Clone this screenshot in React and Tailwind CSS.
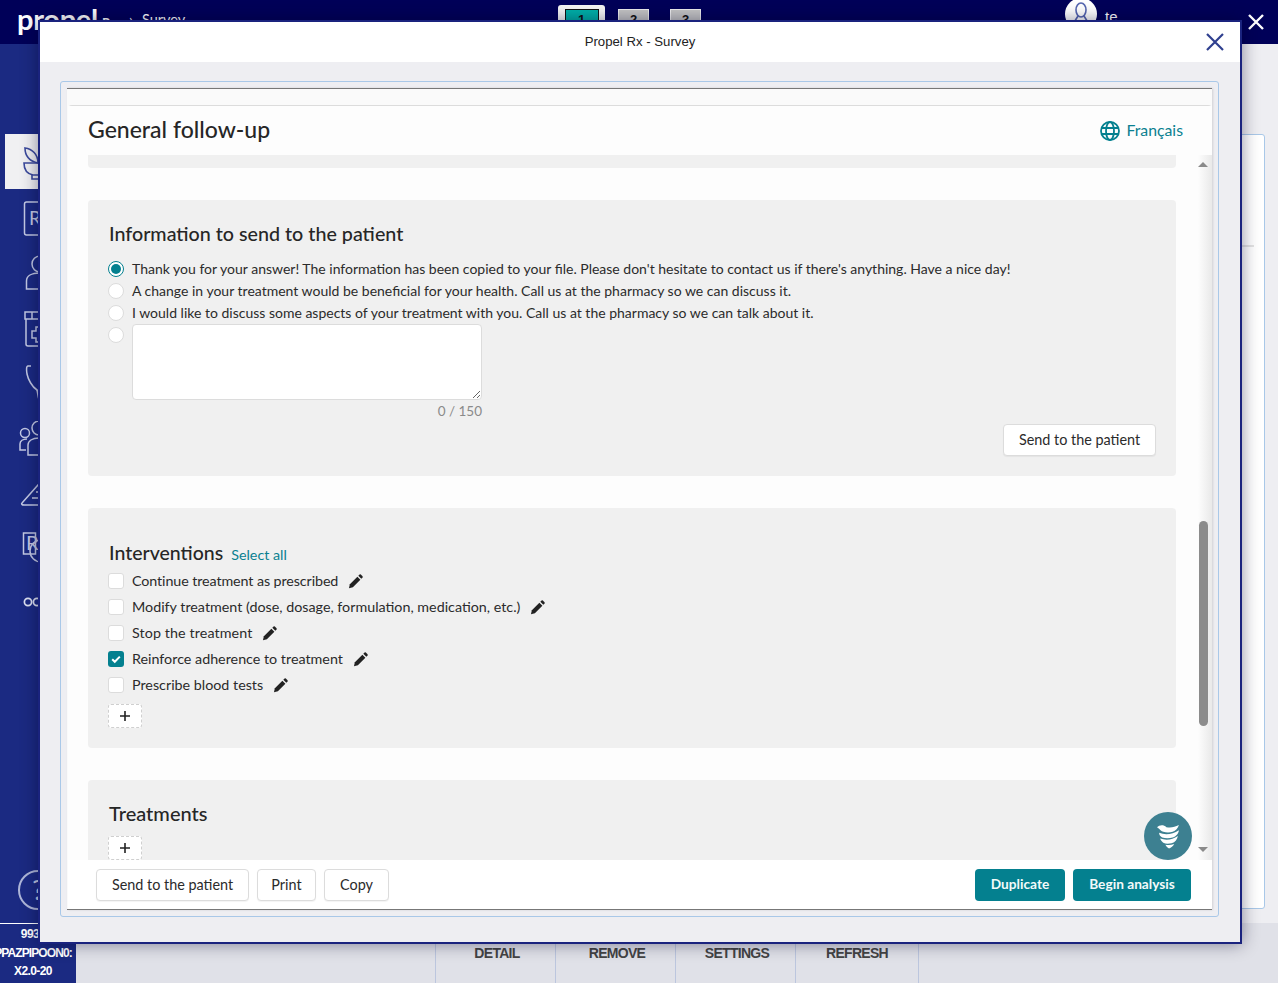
import React from "react";

const Pencil = () => (
  <svg className="shrink-0" width="15" height="15" viewBox="0 0 16 16" fill="#222">
    <path d="M1 15.2L2 10.8L10 2.8L13.2 6L5.2 14Z" />
    <path d="M11 1.8L12.3.5Q13 0 13.7.5L15.5 2.3Q16 3 15.5 3.7L14.2 5Z" />
  </svg>
);

const Check = ({ label, checked, className = "" }) => (
  <div className="flex items-center h-[26px]">
    {checked ? (
      <span className="w-[16px] h-[16px] rounded-[3px] bg-[#04808f] flex items-center justify-center shrink-0">
        <svg width="10" height="10" viewBox="0 0 10 10" fill="none" stroke="#fff" strokeWidth="2"><path d="M1.2 5.2l2.6 2.6 5-5.2" /></svg>
      </span>
    ) : (
      <span className="w-[16px] h-[16px] rounded-[3px] bg-white border border-[#dcdcdc] shrink-0" />
    )}
    <span className={"ml-[8px] mr-[10px] text-[14.3px] text-[#2b2b2b] " + className}>{label}</span>
    <Pencil />
  </div>
);

const Radio = ({ checked }) =>
  checked ? (
    <span className="w-[16px] h-[16px] rounded-full bg-white border border-[#04808f] flex items-center justify-center shrink-0">
      <span className="w-[10px] h-[10px] rounded-full bg-[#04808f]" />
    </span>
  ) : (
    <span className="w-[16px] h-[16px] rounded-full bg-white border border-[#dcdcdc] shrink-0" />
  );

const RadioRow = ({ label, checked }) => (
  <div className="flex items-center h-[22px]">
    <Radio checked={checked} />
    <span className="ml-[8px] pb-[2px] text-[14px] text-[#2b2b2b] whitespace-nowrap">{label}</span>
  </div>
);

const Btn = ({ children, className = "" }) => (
  <button className={"h-[32px] px-0 bg-white border border-[#dcdcdc] rounded-[4px] text-[14.4px] text-[#2b2b2b] shadow-[0_1px_1px_rgba(0,0,0,0.05)] " + className}>
    {children}
  </button>
);

const Teal = ({ children, className = "" }) => (
  <button className={"h-[32px] px-0 bg-[#04808f] rounded-[4px] text-[13.7px] font-bold text-[#f2fafa] " + className}>{children}</button>
);

const Plus = () => (
  <div className="w-[34px] h-[24px] bg-white border border-dashed border-[#cfcfcf] rounded-[3px] flex items-center justify-center">
    <svg width="12" height="12" viewBox="0 0 12 12" stroke="#222" strokeWidth="1.6"><path d="M6 1v10M1 6h10" /></svg>
  </div>
);

const S = { fill: "none", stroke: "#c3c9e4", strokeWidth: 1.5 };

function Sidebar() {
  return (
    <div className="w-[76px] bg-[#1b2a82] shrink-0 flex flex-col pt-[90px]">
      <div className="ml-[5px] h-[55px] w-[71px] bg-[#f0f0f2] flex items-center pl-[16px]">
        <svg width="40" height="40" viewBox="0 0 40 40" fill="none" stroke="#3b4a9c" strokeWidth="1.6">
          <path d="M3 21h30c0 7-5 11-9 12H12C7 32 3 28 3 21z" />
          <path d="M11 33v4h14v-4" />
          <path d="M17 21C8 19 4 13 4 6c7 1 13 6 13 15zM18 21c0-8 5-14 13-16 1 8-4 14-13 16z" />
        </svg>
      </div>
      <svg className="ml-[20px] mt-[12px] shrink-0" width="40" height="35" viewBox="0 0 40 35" {...S}>
        <rect x="4.5" y="1" width="32" height="33" rx="2" />
        <text x="9" y="24" fontSize="19" fill="#c3c9e4" stroke="none" fontFamily="Lato, sans-serif">Rx</text>
      </svg>
      <svg className="ml-[20px] mt-[19px] shrink-0" width="40" height="36" viewBox="0 0 40 36" {...S}>
        <circle cx="20" cy="9" r="8" />
        <path d="M6.5 34V26c0-5 5-8 13-8s14 3 14 8v8z" />
      </svg>
      <svg className="ml-[20px] mt-[20px] shrink-0" width="40" height="36" viewBox="0 0 40 36" {...S}>
        <path d="M5 1h30v7H5zM6 8v25a2 2 0 002 2h24a2 2 0 002-2V8" />
        <path d="M16 16h7v4h4v7h-4v4h-7v-4h-4v-7h4z" />
        <path d="M12 1v7M19 1v7M26 1v7" />
      </svg>
      <svg className="ml-[20px] mt-[18px] shrink-0" width="40" height="38" viewBox="0 0 40 38" {...S}>
        <path d="M11 1H8C6 1 6.5 6 7 9c1 5 5 13 10 16 6 3 16 2 18-4" />
        <path d="M17 25c1 4 1 9 3 12" />
      </svg>
      <svg className="ml-[19px] mt-[18px] shrink-0" width="42" height="36" viewBox="0 0 42 36" {...S}>
        <circle cx="6" cy="12" r="4.5" />
        <path d="M7 29H1v-6c0-3 3-5 7-5" />
        <circle cx="20" cy="7" r="7" />
        <path d="M9 34V24c0-4 4-7 11-7s13 3 13 7v10z" />
      </svg>
      <svg className="ml-[20px] mt-[25px] shrink-0" width="40" height="26" viewBox="0 0 40 26" {...S}>
        <path d="M2 21L18 3c8 4 14 10 18 20H4c-2 0-3-1-2-2z" />
        <path d="M12 16h12M16 10h8" />
      </svg>
      <svg className="ml-[20px] mt-[24px] shrink-0" width="40" height="32" viewBox="0 0 40 32" {...S}>
        <path d="M3.5 1h12v21h-12zM3.5 1" />
        <text x="6" y="18" fontSize="20" fill="#c3c9e4" stroke="none" fontFamily="Lato, sans-serif">R</text>
        <circle cx="21" cy="19" r="11" />
      </svg>
      <svg className="ml-[20px] mt-[31px] shrink-0" width="40" height="14" viewBox="0 0 40 14" fill="none" stroke="#dfe3f2" strokeWidth="1.7">
        <circle cx="8" cy="7" r="3.6" />
        <circle cx="17" cy="7" r="3.6" />
        <circle cx="26" cy="7" r="3.6" />
      </svg>
      <div className="mt-auto ml-[18px] mb-[13px] w-[40px] h-[40px] rounded-full border-2 border-[#aeb6d8] flex items-center justify-center text-[#c3c9e4] text-[26px] font-['Lato',sans-serif]">?</div>
    </div>
  );
}

function Survey() {
  return (
    <div className="relative h-[705px] overflow-hidden bg-[#fdfdfd]">
      <div className="pl-[20px] w-[1108px]">
        <div className="h-[13px] bg-[#f0f0f0] rounded-b-[4px]" />

        <section className="mt-[32px] h-[276px] bg-[#f0f0f0] rounded-[4px] px-[20px] pt-[20px]">
          <h2 className="ml-[1px] text-[19.7px] leading-[28px] font-medium text-[#262626]">Information to send to the patient</h2>
          <div className="mt-[10px]">
            <RadioRow checked label="Thank you for your answer! The information has been copied to your file. Please don't hesitate to contact us if there's anything. Have a nice day!" />
            <RadioRow label="A change in your treatment would be beneficial for your health. Call us at the pharmacy so we can discuss it." />
            <RadioRow label="I would like to discuss some aspects of your treatment with you. Call us at the pharmacy so we can talk about it." />
            <div className="flex items-start h-[76px]">
              <span className="mt-[3px] flex"><Radio /></span>
              <textarea aria-label="Custom message" className="ml-[8px] w-[350px] h-[76px] bg-white border border-[#dcdcdc] rounded-[4px]" />
            </div>
          </div>
          <div className="w-[374px] text-right text-[13.5px] leading-[22px] text-[#8a8a8a]">0 / 150</div>
          <div className="mt-[2px] flex justify-end">
            <Btn className="w-[153px]">Send to the patient</Btn>
          </div>
        </section>

        <section className="mt-[32px] h-[240px] bg-[#f0f0f0] rounded-[4px] px-[20px] pt-[31px]">
          <div className="flex items-baseline h-[28px]">
            <h2 className="ml-[1px] text-[19.5px] leading-[28px] font-medium text-[#262626]">Interventions</h2>
            <a className="ml-[8px] text-[14.3px] text-[#0a8090]">Select all</a>
          </div>
          <div className="mt-[1px]">
            <Check label="Continue treatment as prescribed" className="tracking-[-0.1px]" />
            <Check label="Modify treatment (dose, dosage, formulation, medication, etc.)" />
            <Check label="Stop the treatment" className="tracking-[0.1px]" />
            <Check checked label="Reinforce adherence to treatment" />
            <Check label="Prescribe blood tests" />
          </div>
          <div className="mt-[6px]"><Plus /></div>
        </section>

        <section className="mt-[32px] h-[120px] bg-[#f0f0f0] rounded-[4px] px-[20px] pt-[19px]">
          <h2 className="ml-[1px] text-[20px] leading-[28px] font-medium text-[#262626]">Treatments</h2>
          <div className="mt-[9px]"><Plus /></div>
        </section>
      </div>

      {/* scrollbar overlay */}
      <div className="absolute right-0 top-0 bottom-0 w-[14px] bg-gradient-to-r from-transparent to-[#e9e9e9]" />
      <span className="absolute left-[1130px] top-[7px] w-0 h-0 border-x-[5px] border-x-transparent border-b-[5px] border-b-[#8a8a8a]" />
      <span className="absolute left-[1131px] top-[366px] w-[9px] h-[205px] rounded-full bg-[#8c8c8c]" />
      <span className="absolute left-[1130px] top-[692px] w-0 h-0 border-x-[5px] border-x-transparent border-t-[5px] border-t-[#8a8a8a]" />
    </div>
  );
}

export default function App() {
  return (
    <div className="relative w-[1278px] h-[983px] overflow-hidden bg-[#eeeef2] font-['Lato','Liberation_Sans',sans-serif] flex flex-col">
      {/* top bar */}
      <header className="h-[44px] bg-[#000058] flex items-start shrink-0 text-white">
        <div className="ml-[17px] w-[112px] flex items-start shrink-0">
          <span className="mt-[-3px] text-[29px] leading-[44px] font-bold tracking-[-0.3px]">propel</span>
          <span className="ml-[4px] mt-[11px] text-[13px] leading-[24px] font-bold">Rx</span>
        </div>
        <span className="w-[13px] mt-[9px] text-[14.5px] shrink-0">›</span>
        <span className="w-[416px] mt-[9px] text-[14.5px] shrink-0">Survey</span>
        <div className="mt-[5px] w-[47px] h-[30px] bg-[#f4f4f4] rounded-t-[3px] flex justify-center pt-[4px] shrink-0">
          <span className="w-[34px] h-[30px] bg-[#00b0a8] border border-[#111] text-[#111] text-[13px] font-bold text-center font-['Liberation_Sans',sans-serif]">1</span>
        </div>
        <span className="ml-[13px] mt-[9px] w-[31px] h-[30px] bg-[#c4c4c4] border border-[#eee] text-[#111] text-[13px] font-bold text-center font-['Liberation_Sans',sans-serif]">2</span>
        <span className="ml-[21px] mt-[9px] w-[31px] h-[30px] bg-[#c4c4c4] border border-[#eee] text-[#111] text-[13px] font-bold text-center font-['Liberation_Sans',sans-serif]">3</span>
        <span className="ml-[364px] -mt-[2px] w-[32px] h-[32px] rounded-full bg-white flex items-center justify-center shrink-0">
          <svg width="20" height="24" viewBox="0 0 20 24" fill="none" stroke="#5566b0" strokeWidth="1.6"><ellipse cx="10" cy="8" rx="5" ry="7" /><path d="M7 14l-5 8M13 14l5 8" /></svg>
        </span>
        <span className="ml-[8px] mt-[6px] text-[15px] font-['Liberation_Sans',sans-serif]">te</span>
        <svg className="ml-[130px] mt-[14px] shrink-0" width="16" height="16" viewBox="0 0 16 16" stroke="#fff" strokeWidth="2.4"><path d="M1 1l14 14M15 1L1 15" /></svg>
      </header>

      {/* page body behind the dialog */}
      <div className="flex-1 flex min-h-0">
        <Sidebar />
        <main className="flex-1 flex justify-end pt-[90px] pb-[14px] pr-[13px]">
          <div className="w-[200px] bg-white border border-[#a9c8e8] rounded-[3px]">
            <div className="ml-auto mr-[10px] mt-[110px] w-[100px] h-[2px] bg-[#e4e4e4]" />
          </div>
        </main>
      </div>

      {/* footer */}
      <footer className="h-[60px] bg-[#e0e1e8] flex shrink-0 font-['Liberation_Sans',sans-serif]">
        <div className="w-[76px] pr-[10px] bg-[#1b2a82] border-t border-white text-white text-[12px] font-bold leading-[18.5px] flex flex-col items-center pt-[1px] overflow-hidden tracking-[-0.6px] whitespace-nowrap">
          <span>9931</span>
          <span className="tracking-[-0.9px]">PPAZPIPOON0:</span>
          <span>X2.0-20</span>
        </div>
        <div className="ml-[359px] flex border-r border-[#bcc6de] h-full">
          {["DETAIL", "REMOVE", "SETTINGS", "REFRESH"].map((t, i) => (
            <div key={t} className={(i === 3 ? "w-[123px] " : "w-[120px] pl-[3px] ") + "border-l border-[#bcc6de] text-center pt-[21px] text-[14px] leading-[18px] font-bold text-[#444] tracking-[-0.7px]"}>{t}</div>
          ))}
        </div>
      </footer>

      {/* dialog */}
      <div className="absolute left-[38px] top-[20px] w-[1204px] h-[924px] border-2 border-[#1a237e] bg-[#eeeef2] shadow-[0_0_16px_rgba(0,0,40,0.45)] flex flex-col">
        <div className="h-[40px] bg-white flex items-center justify-center relative shrink-0">
          <span className="text-[13.2px] text-[#222] font-['Liberation_Sans',sans-serif]">Propel Rx - Survey</span>
          <svg className="absolute right-[16px] top-[11px]" width="18" height="18" viewBox="0 0 18 18" stroke="#2f3f8f" strokeWidth="2.2"><path d="M1 1l16 16M17 1L1 17" /></svg>
        </div>
        <div className="flex-1 min-h-0 ml-[20px] mr-[21px] mt-[19px] mb-[25px] border border-[#a9c8e8] rounded-[3px] p-[6px]">
          <div className="h-full border-y border-[#777] bg-[#fafafa] pt-[16px] flex flex-col shadow-[1px_0_2px_rgba(0,0,0,0.12)]">
            <div className="flex-1 min-h-0 ml-[1px] border-t border-[#dcdcdc] rounded-t-[4px] bg-white flex flex-col">
              <div className="h-[49px] shrink-0 flex items-center justify-between pl-[20px] pr-[29px] bg-[#fdfdfd]">
                <h1 className="text-[23px] pb-[2px] font-medium text-[#262626]">General follow-up</h1>
                <div className="flex items-center gap-[6px] text-[#0a8090] text-[15.8px] leading-[20px]">
                  <svg width="20" height="20" viewBox="0 0 20 20" fill="none" stroke="#04808f" strokeWidth="1.8">
                    <circle cx="10" cy="10" r="9" />
                    <ellipse cx="10" cy="10" rx="4" ry="9" />
                    <path d="M1 7h18M1 13h18" />
                  </svg>
                  <span className="-mt-[2px]">Français</span>
                </div>
              </div>
              <Survey />
              <div className="flex-1 flex items-center justify-between pl-[28px] pr-[21px] bg-white">
                <div className="flex gap-[8px]">
                  <Btn className="w-[153px]">Send to the patient</Btn>
                  <Btn className="w-[59px]">Print</Btn>
                  <Btn className="w-[65px]">Copy</Btn>
                </div>
                <div className="flex gap-[8px]">
                  <Teal className="w-[90px]">Duplicate</Teal>
                  <Teal className="w-[118px]">Begin analysis</Teal>
                </div>
              </div>
            </div>
          </div>
        </div>
      </div>

      {/* floating assistant button */}
      <div className="absolute left-[1144px] top-[812px] w-[48px] h-[48px] rounded-full bg-[#3d8091] flex items-center justify-center">
        <svg width="23" height="25" viewBox="0 0 22 24" fill="#fff">
          <path d="M0 3C2 1 6 0 9 3c4 1 8 0 12-2-1 3-3 5.500-6 6.500-3 .8-6 .8-9 0C4 7 3 5 0 3z" />
          <path d="M2 8.500c6 2.500 13 1.500 19-2.500-.5 3-2 5.500-6 7-3 1-7 1-10 0-2-1-3-2.500-3-4.500z" />
          <path d="M3 14c6 2 12 1 17-2.500-.5 3-2.500 6-6 7-3 .7-6 .7-8-.5-1.500-1-2.500-2.500-3-4z" />
          <path d="M8 20c3 .5 6 .3 8.500-.8-1 2-3 3.800-5 4.300-1.500-.5-2.500-2-3.500-3.500z" />
        </svg>
      </div>
    </div>
  );
}
